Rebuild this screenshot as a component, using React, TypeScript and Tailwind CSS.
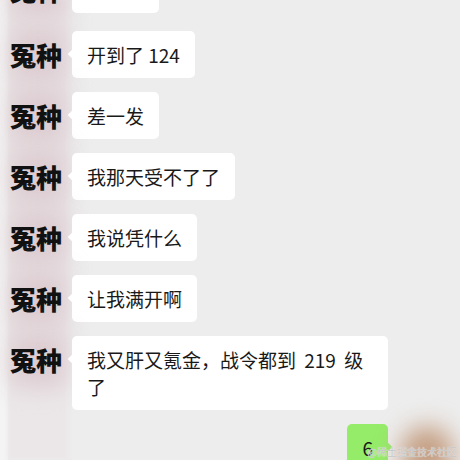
const font = { fontFamily: '"Noto Sans CJK SC", "Noto Sans", sans-serif' };

const messages = [
  "哈哈哈",
  "开到了 124",
  "差一发",
  "我那天受不了了",
  "我说凭什么",
  "让我满开啊",
];

function Avatar() {
  return (
    <div className="relative flex h-[47px] w-[60px] items-center pl-[2px]">
      <div className="absolute inset-x-[2px] inset-y-[-4px] rounded-md bg-[#dccbd0] blur-md" />
      <span className="relative text-[26px] font-black leading-none text-[#111]">冤种</span>
    </div>
  );
}

function Bubble({ children, wide }: { children: React.ReactNode; wide?: boolean }) {
  return (
    <div
      className={
        "relative ml-[4px] rounded-[5px] bg-white px-[15px] py-[10px] text-[19px] leading-[27px] text-[#191919] " +
        (wide ? "w-[316px] [word-spacing:4px]" : "w-fit")
      }
    >
      <span className="absolute left-[-3px] top-[20px] h-[6px] w-[6px] rotate-45 bg-white" />
      <span className="relative">{children}</span>
    </div>
  );
}

function Row({ text, first, wide }: { text: string; first?: boolean; wide?: boolean }) {
  return (
    <div className={"flex items-stretch " + (first ? "pb-[11px] pt-0" : "py-[7px]")}>
      <div className="flex w-[60px] shrink-0 flex-col">
        <Avatar />
      </div>
      <Bubble wide={wide}>{first ? <span className="text-transparent">{text}</span> : text}</Bubble>
    </div>
  );
}

export default function App() {
  return (
    <div className="relative flex h-[460px] w-[460px] overflow-hidden bg-[#ededed]" style={font}>
      <div className="w-2 shrink-0 bg-[#f4f4f4]" />
      <div className="relative flex flex-1 flex-col">
        <div className="absolute left-0 top-0 h-full w-[60px] bg-[#ebe7e8] blur-[2px]" />
        <div className="relative mt-[-34px] flex flex-col">
          {messages.map((m, i) => (
            <Row key={i} text={m} first={i === 0} />
          ))}
          <Row text="我又肝又氪金，战令都到 219 级了" wide />
          <div className="flex justify-end pt-[7px]">
            <div className="relative rounded-[5px] bg-[#95ec69] px-[15px] py-[10px] text-[19px] leading-[27px] text-[#191919]">
              <span className="absolute right-[-3px] top-[20px] h-[6px] w-[6px] rotate-45 bg-[#95ec69]" />
              <span className="relative">6</span>
            </div>
            <div className="relative ml-[6px] h-[60px] w-[66px]">
              <div className="absolute inset-x-[6px] inset-y-[2px] rounded-full bg-[#c49e82] blur-md" />
            </div>
          </div>
        </div>
      </div>
      <div className="absolute bottom-[3px] right-[3px] text-[10px] leading-none text-[#c4c4c4] [text-shadow:0_0_1px_#fff]">
        @稀土掘金技术社区
      </div>
    </div>
  );
}
